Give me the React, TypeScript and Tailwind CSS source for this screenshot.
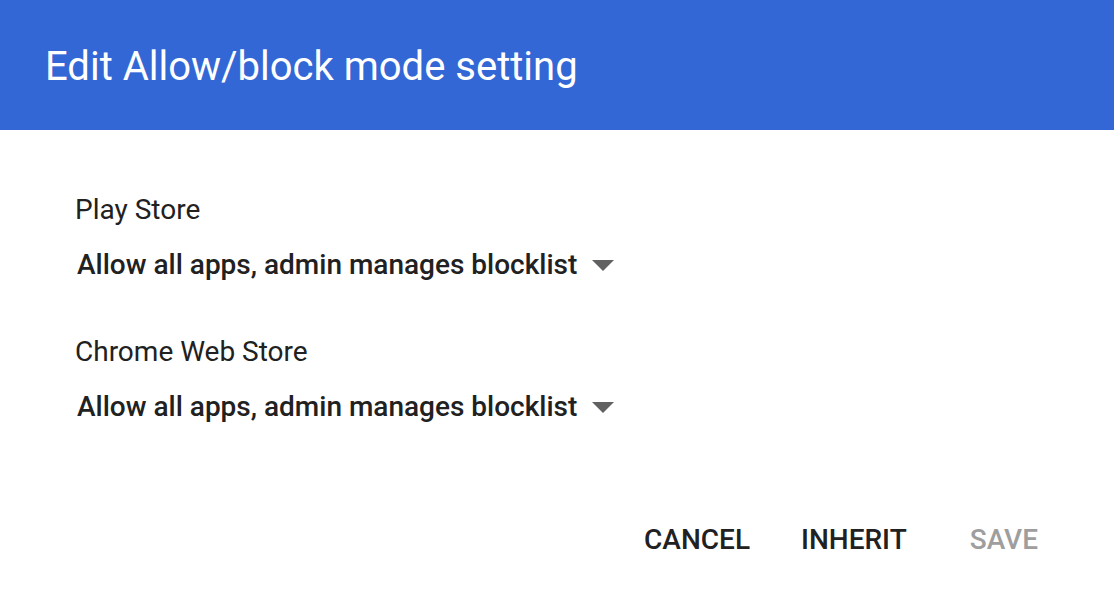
export default function App() {
  return (
    <div className="w-[1114px] h-[608px] bg-white overflow-hidden" style={{ fontFamily: "Roboto, 'Noto Sans', sans-serif" }}>
      <div className="h-[130px] bg-[#3367d6] flex items-center px-[45px] pt-[3px]">
        <h1 className="text-white text-[40px] leading-none font-normal">Edit Allow/block mode setting</h1>
      </div>

      <div className="pl-[75px] pt-[64px]">
        <div className="flex flex-col items-start">
          <label className="text-[28px] leading-[32px] text-[#212121]">Play Store</label>
          <button className="mt-[23px] ml-[2px] flex items-center gap-[15px] text-[28px] leading-[32px] font-medium text-[#212121]">
            <span>Allow all apps, admin manages blocklist</span>
            <span className="w-0 h-0 border-l-[11px] border-r-[11px] border-t-[11px] border-l-transparent border-r-transparent border-t-[#616161]" />
          </button>
        </div>

        <div className="flex flex-col items-start mt-[55px]">
          <label className="text-[28px] leading-[32px] text-[#212121]">Chrome Web Store</label>
          <button className="mt-[23px] ml-[2px] flex items-center gap-[15px] text-[28px] leading-[32px] font-medium text-[#212121]">
            <span>Allow all apps, admin manages blocklist</span>
            <span className="w-0 h-0 border-l-[11px] border-r-[11px] border-t-[11px] border-l-transparent border-r-transparent border-t-[#616161]" />
          </button>
        </div>
      </div>

      <div className="flex justify-end items-center pr-[76px] mt-[101px] gap-[51px] text-[28px] leading-[32px] font-medium">
        <button className="text-[#212121]">CANCEL</button>
        <button className="text-[#212121]">INHERIT</button>
        <button className="text-[#9e9e9e] ml-[12px]">SAVE</button>
      </div>
    </div>
  );
}
